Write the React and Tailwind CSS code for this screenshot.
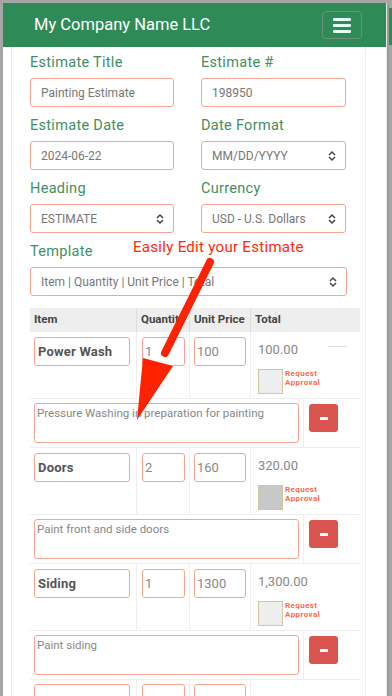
const font = { fontFamily: '"Roboto", "Liberation Sans", sans-serif' };

const Chevrons = () => (
  <svg width="10" height="12" viewBox="0 0 10 12" className="shrink-0">
    <path d="M2 5 L5 2 L8 5 M2 7 L5 10 L8 7" fill="none" stroke="#444" strokeWidth="1.5" />
  </svg>
);

const Field = ({ label, value, select }) => (
  <div className="flex flex-col">
    <div className="leading-[20px] text-[14.5px] tracking-[0.3px] text-[#3f8f5f]">{label}</div>
    <div className="mt-[5px] h-[29px] border border-[#f7a496] rounded-[3px] flex items-center justify-between pl-[10px] pr-[8px] text-[12px] text-[#777]">
      <span className="whitespace-nowrap">{value}</span>
      {select && <Chevrons />}
    </div>
  </div>
);

const items = [
  { name: "Power Wash", qty: "1", price: "100", total: "100.00", desc: "Pressure Washing in preparation for painting", checked: false },
  { name: "Doors", qty: "2", price: "160", total: "320.00", desc: "Paint front and side doors", checked: true },
  { name: "Siding", qty: "1", price: "1300", total: "1,300.00", desc: "Paint siding", checked: false },
];

const ItemRow = ({ item, first }) => (
  <>
    <div className="grid grid-cols-[107px_53px_61px_109px] border-b border-[#eee]">
      <div className="border-r border-[#eee] pl-[4px] pr-[6px] pt-[5px] h-[66px]">
        <div className="h-[29px] border border-[#f7a496] rounded-[3px] flex items-center pl-[3px] text-[13px] font-bold tracking-[0.2px] text-[#555]">
          {item.name}
        </div>
      </div>
      <div className="border-r border-[#eee] pl-[5px] pr-[4px] pt-[5px]">
        <div className="h-[29px] border border-[#f7a496] rounded-[3px] flex items-center pl-[2px] text-[13px] text-[#888]">{item.qty}</div>
      </div>
      <div className="border-r border-[#eee] pl-[4px] pr-[4px] pt-[5px]">
        <div className="h-[29px] border border-[#f7a496] rounded-[3px] flex items-center pl-[2px] text-[13px] text-[#888]">{item.price}</div>
      </div>
      <div className="relative pl-[7px] pt-[10px]">
        <div className="text-[13px] text-[#888] leading-[16px]">{item.total}</div>
        {first && <div className="absolute left-[77px] top-[14px] w-[19px] h-px bg-[#ddd]" />}
        <div className="mt-[11px] flex items-start">
          <div className={`w-[25px] h-[25px] border border-[#cfc7a0] ${item.checked ? "bg-[#c8c8c8]" : "bg-[#eee]"}`} />
          <div className="ml-[2px] text-[8px] font-bold leading-[9px] tracking-[0.4px] text-[#ff6a4d]">
            Request<br />Approval
          </div>
        </div>
      </div>
    </div>
    <div className="grid grid-cols-[274px_56px] border-b border-[#eee]">
      <div className="border-r border-[#eee] pl-[4px] pr-[4px] pt-[4px] pb-[4px]">
        <div className="h-[40px] border border-[#f7a496] rounded-[3px] px-[2px] text-[11.5px] text-[#888] leading-[18px]">
          {item.desc}
        </div>
      </div>
      <div className="pl-[5px] pt-[5px]">
        <div className="w-[29px] h-[28px] rounded-[3px] bg-[#d9534f] flex items-center justify-center">
          <div className="w-[8px] h-[3px] bg-white" />
        </div>
      </div>
    </div>
  </>
);

export default function App() {
  return (
    <div className="w-[392px] h-[696px] overflow-hidden bg-[#a6a6a6] pt-[3px] pl-[3px] flex" style={font}>
      <div className="w-[383px] bg-white relative shrink-0">
        <div className="h-[44px] bg-[#2e8b57] flex items-center justify-between pl-[31px] pr-[24px]">
          <span className="text-white text-[16.5px]">My Company Name LLC</span>
          <button className="w-[40px] h-[28px] border border-[#6e8f7c] rounded-[4px] flex flex-col items-center justify-center gap-[3px]">
            <span className="block w-[18px] h-[3px] bg-[#e6fff8] rounded-[1px]" />
            <span className="block w-[18px] h-[3px] bg-[#e6fff8] rounded-[1px]" />
            <span className="block w-[18px] h-[3px] bg-[#e6fff8] rounded-[1px]" />
          </button>
        </div>
        <div className="ml-[8px] w-[355px] border-x border-dotted border-[#ddd] pl-[18px] pr-[18px] pt-[6px] min-h-[660px]">
          <div className="grid grid-cols-[144px_145px] gap-x-[27px] gap-y-[9px]">
            <Field label="Estimate Title" value="Painting Estimate" />
            <Field label="Estimate #" value="198950" />
            <Field label="Estimate Date" value="2024-06-22" />
            <Field label="Date Format" value="MM/DD/YYYY" select />
            <Field label="Heading" value="ESTIMATE" select />
            <Field label="Currency" value="USD - U.S. Dollars" select />
          </div>
          <div className="mt-[9px]">
            <Field label="Template" value="Item | Quantity | Unit Price | Total" select />
          </div>
          <div className="mt-[12px] w-[330px]">
            <div className="grid grid-cols-[107px_53px_61px_109px] h-[24px] bg-[#eee] text-[11.5px] font-bold text-[#444]">
              <div className="border-r border-[#ddd] pl-[4px] flex items-center">Item</div>
              <div className="border-r border-[#ddd] pl-[4px] flex items-center overflow-hidden whitespace-nowrap">Quantit</div>
              <div className="border-r border-[#ddd] pl-[4px] flex items-center whitespace-nowrap">Unit Price</div>
              <div className="pl-[4px] flex items-center">Total</div>
            </div>
            {items.map((it, i) => (
              <ItemRow key={i} item={it} first={i === 0} />
            ))}
            <div className="grid grid-cols-[107px_53px_61px_109px]">
              <div className="border-r border-[#eee] pl-[4px] pr-[6px] pt-[4px]">
                <div className="h-[29px] border border-[#f7a496] rounded-[3px]" />
              </div>
              <div className="border-r border-[#eee] pl-[5px] pr-[4px] pt-[4px]">
                <div className="h-[29px] border border-[#f7a496] rounded-[3px]" />
              </div>
              <div className="border-r border-[#eee] pl-[4px] pr-[4px] pt-[4px]">
                <div className="h-[29px] border border-[#f7a496] rounded-[3px]" />
              </div>
              <div />
            </div>
          </div>
        </div>

        <div className="absolute left-[130px] top-[233px] text-[15px] text-[#ff2a0a] tracking-[0.3px] whitespace-nowrap">
          Easily Edit your Estimate
        </div>
        <svg className="absolute left-0 top-0 pointer-events-none" width="383" height="693" viewBox="0 0 383 693">
          <line x1="207" y1="259" x2="162" y2="350" stroke="#ff2200" strokeWidth="8" strokeLinecap="round" />
          <polygon points="140,355 170,363 134,417" fill="#ff2200" />
        </svg>
      </div>
      <div className="w-[1px] bg-[#e8e8e8]" />
      <div className="w-[2px] bg-[#9a9a9a]" />
      <div className="w-[3px] flex flex-col">
        <div className="h-[5px] bg-[#a6a6a6]" />
        <div className="h-[37px] bg-[#2e8b57]" />
        <div className="flex-1 bg-[#a6a6a6]" />
      </div>
    </div>
  );
}
